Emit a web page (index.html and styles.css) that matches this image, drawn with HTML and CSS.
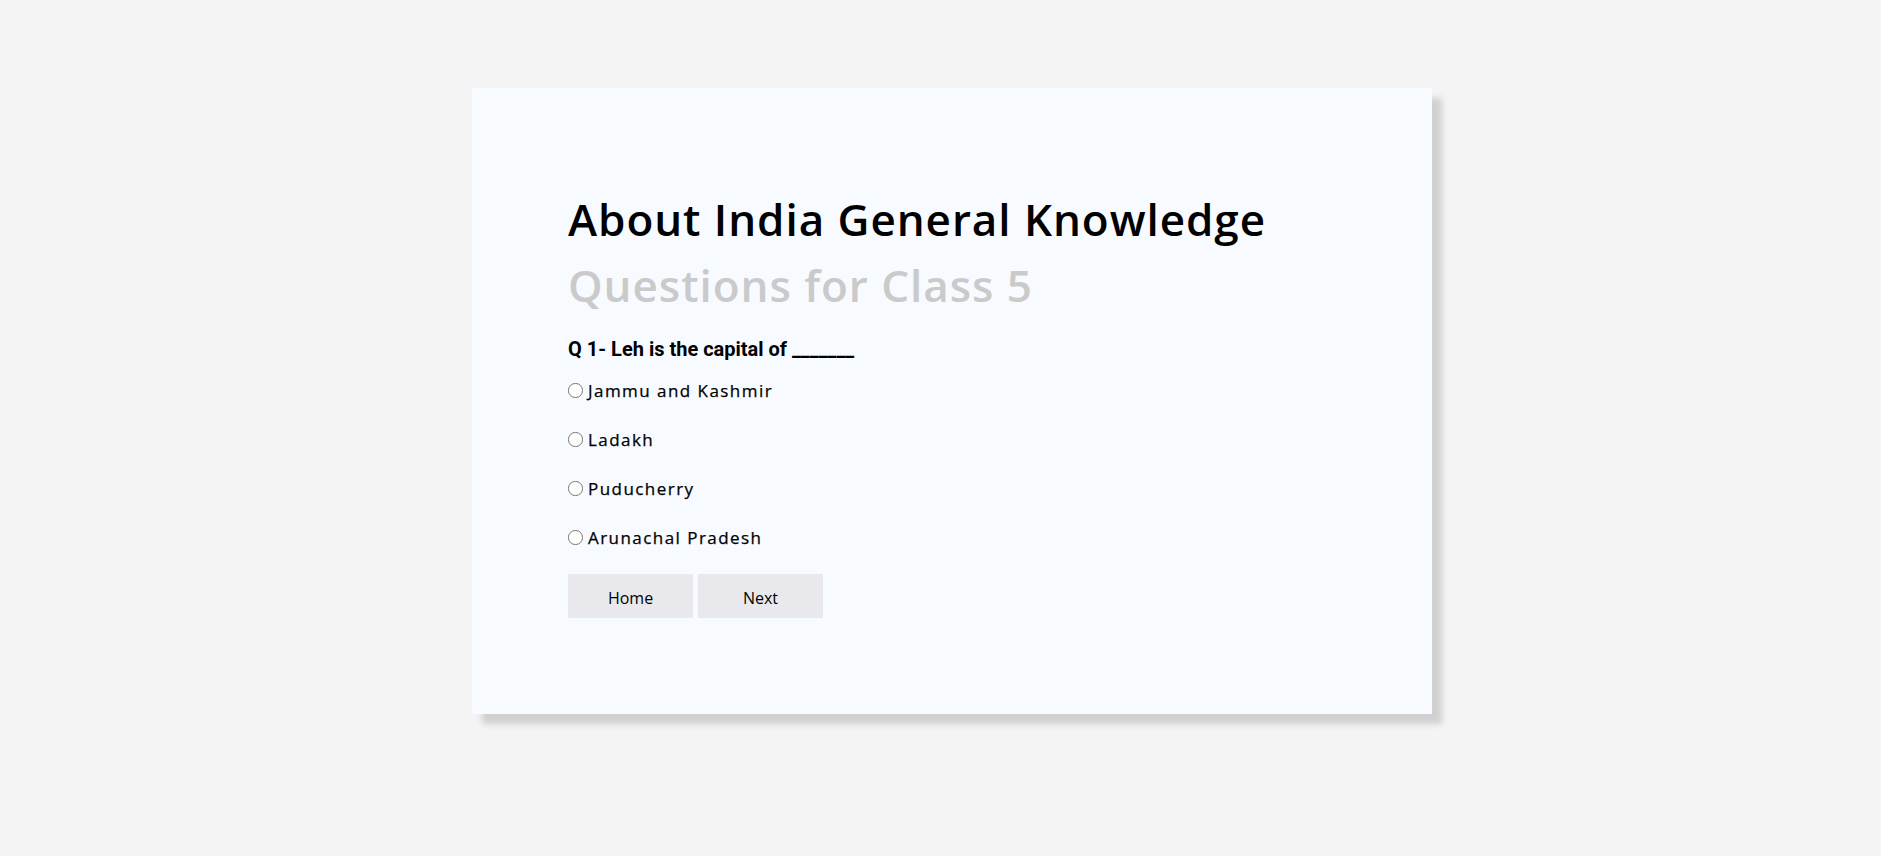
FILE: index.html
```html
<!DOCTYPE html>
<html lang="en">
<head>
<meta charset="utf-8">
<title>About India General Knowledge</title>
<link rel="stylesheet" href="styles.css">
</head>
<body>
  <main class="card">
    <h1 class="title">About India General Knowledge<span class="subtitle">Questions for Class 5</span></h1>
    <p class="question">Q 1- Leh is the capital of _______</p>
    <form class="quiz">
      <div class="options">
        <label class="option"><span class="radio"></span><span class="option-text">Jammu and Kashmir</span></label>
        <label class="option"><span class="radio"></span><span class="option-text">Ladakh</span></label>
        <label class="option"><span class="radio"></span><span class="option-text">Puducherry</span></label>
        <label class="option"><span class="radio"></span><span class="option-text">Arunachal Pradesh</span></label>
      </div>
      <div class="actions">
        <button type="button" class="btn">Home</button>
        <button type="button" class="btn">Next</button>
      </div>
    </form>
  </main>
</body>
</html>
```
FILE: styles.css
```css
html, body {
  margin: 0;
  padding: 0;
}
body {
  background: #f4f4f4;
  width: 1881px;
  height: 856px;
  overflow: hidden;
  font-family: "Open Sans", "Liberation Sans", sans-serif;
}
.card {
  width: 960px;
  height: 626px;
  box-sizing: border-box;
  margin: 88px 0 0 472px;
  padding: 98px 96px 0 96px;
  background: #f7faff;
  box-shadow: 10px 10px 6px #d0d0d0;
  display: flex;
  flex-direction: column;
}
.title {
  margin: 0;
  font-family: "Open Sans", "Liberation Sans", sans-serif;
  font-weight: 600;
  font-size: 44px;
  line-height: 66px;
  letter-spacing: 0.95px;
  color: #000;
}
.subtitle {
  display: block;
  color: #cacaca;
}
.question {
  margin: 20px 0 0 0;
  font-family: Roboto, "Liberation Sans", sans-serif;
  font-weight: 700;
  font-size: 20px;
  line-height: 23px;
  color: #000;
}
.quiz {
  margin: 0;
}
.options {
  margin-top: 17px;
  display: flex;
  flex-direction: column;
  gap: 24px;
}
.option {
  display: flex;
  align-items: center;
  height: 25px;
  font-size: 17px;
  line-height: 25px;
  letter-spacing: 1.45px;
  color: #000;
  -webkit-text-stroke: 0.25px #000;
}
.radio {
  width: 12.5px;
  height: 12.5px;
  border: 1.5px solid #767676;
  border-radius: 50%;
  background: #fff;
  margin-right: 5.5px;
  flex: none;
}
.actions {
  margin-top: 24px;
  display: flex;
  gap: 5px;
}
.btn {
  width: 125px;
  height: 44px;
  border: none;
  background: #e9e9ed;
  font-family: "Open Sans", "Liberation Sans", sans-serif;
  font-size: 16px;
  color: #000;
  padding: 3px 0 0 0;
}
```
